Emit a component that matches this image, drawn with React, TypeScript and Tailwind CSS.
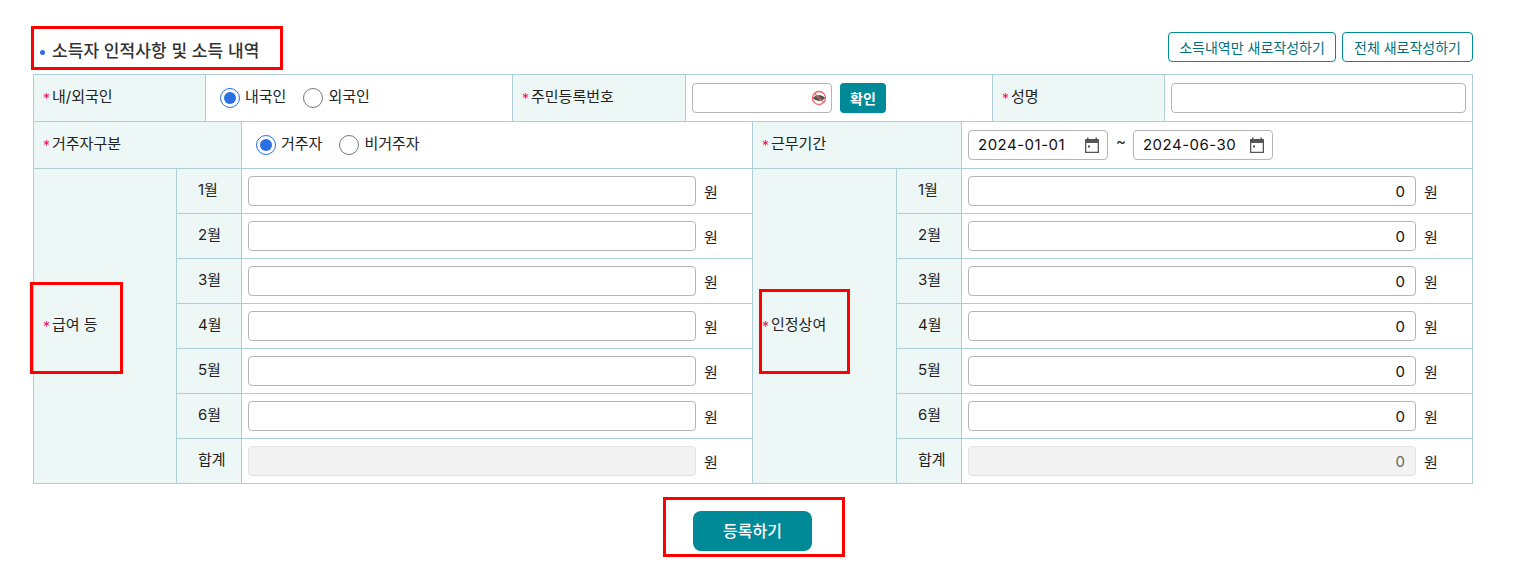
const months = ["1월", "2월", "3월", "4월", "5월", "6월"]

const font = "font-['Inter','Noto_Sans_CJK_KR',sans-serif]"
const cell = "border-r border-b border-[#aecdd4] flex items-center"
const head = `${cell} bg-[#edf7f6] pl-[9px] pb-[1px] text-[15px] text-[#222]`
const subHead = `${cell} bg-[#edf7f6] pl-[21px] pb-[1px] text-[15px] text-[#222]`
const field = "h-[30px] rounded-[4px] border px-[9px] text-[15px] outline-none"

function Label({ text }: { text: string }) {
  return (
    <>
      <span className="mr-[2px] mt-[3px] text-[14px] leading-none text-[#f0115f]">*</span>
      <span>{text}</span>
    </>
  )
}

function Radio({ label, checked, gap }: { label: string; checked?: boolean; gap: string }) {
  return (
    <label className={`flex items-center gap-[5px] text-[15px] text-[#222] ${gap}`}>
      <span
        className={`flex h-[20px] w-[20px] items-center justify-center rounded-full border bg-white ${
          checked ? "border-[#2b6fe4]" : "border-[#767676]"
        }`}
      >
        {checked && <span className="h-[12px] w-[12px] rounded-full bg-[#2b6fe4]" />}
      </span>
      <span className="-mt-[1px]">{label}</span>
    </label>
  )
}

function CalendarIcon() {
  return (
    <svg width="18" height="18" viewBox="0 0 18 18" className="shrink-0">
      <path
        d="M4 1.500h1.500V3h7V1.500H14V3h1.500A.5.5 0 0 1 16 3.500v13a.5.5 0 0 1-.5.5h-13a.5.5 0 0 1-.5-.5v-13A.5.5 0 0 1 2.500 3H4zM3.300 7v8.700h11.400V7z"
        fill="#555"
        fillRule="evenodd"
      />
      <rect x="5" y="9.500" width="2" height="2" fill="#555" />
    </svg>
  )
}

function DateBox({ value }: { value: string }) {
  return (
    <div className="flex h-[30px] w-[140px] items-center justify-between rounded-[4px] border border-[#b5b5b5] bg-white pl-[9px] pr-[6px] text-[15px] tracking-[0.5px] text-[#111]">
      <span>{value}</span>
      <CalendarIcon />
    </div>
  )
}

function EyeOff() {
  return (
    <svg width="16" height="16" viewBox="0 0 16 16" className="absolute right-[5px] top-[7px]">
      <path d="M1.500 8Q8 2 14.500 8 8 14 1.500 8z" fill="#555" />
      <circle cx="8" cy="8" r="6.500" fill="none" stroke="#f0605f" strokeWidth="1.300" />
      <path d="M3.500 3.500 12.500 12.500" stroke="#f0605f" strokeWidth="1.300" />
    </svg>
  )
}

function AmountRow({
  label,
  value,
  disabled,
  span,
}: {
  label: string
  value?: string
  disabled?: boolean
  span: [string, string]
}) {
  return (
    <>
      <div className={`${subHead} ${span[0]}`}>{label}</div>
      <div className={`${cell} ${span[1]} pl-[6px]`}>
        <input
          readOnly
          value={value ?? ""}
          className={`${field} w-[448px] pr-[10px] text-right ${
            disabled ? "border-[#e2e2e2] bg-[#f3f3f3] text-[#666]" : "border-[#b5b5b5] bg-white text-[#111]"
          }`}
        />
        <span className="ml-[8px] mt-[4px] text-[15px] text-[#222]">원</span>
      </div>
    </>
  )
}

export default function App() {
  return (
    <div className={`relative h-[570px] w-[1519px] overflow-hidden bg-white ${font}`}>
      <div className="ml-[33px] w-[1440px] pt-[32px]">
        {/* TITLE */}
        <div className="flex h-[30px] items-center justify-between">
          <h2 className="mt-[10px] flex items-center gap-[7px] pl-[7px] text-[17px] font-medium tracking-[0.1px] text-[#333]">
            <span className="mt-[1px] h-[5px] w-[5px] rounded-full bg-[#2b6fe4]" />
            소득자 인적사항 및 소득 내역
          </h2>

          <div className="flex gap-[6px]">
            <button className="h-[30px] w-[168px] rounded-[4px] border border-[#008a98] bg-white text-[14px] text-[#00707c]">
              소득내역만 새로작성하기
            </button>
            <button className="h-[30px] w-[131px] rounded-[4px] border border-[#008a98] bg-white text-[14px] text-[#00707c]">
              전체 새로작성하기
            </button>
          </div>
        </div>

        {/* TABLE */}
        <div className="mt-[12px] grid grid-cols-[143px_29px_36px_271px_173px_67px_144px_65px_31px_172px_308px] grid-rows-[47px_47px_repeat(7,45px)] border-l border-t border-[#aecdd4]">
          {/* ROW 1 */}
          <div className={`${head} col-span-2`}>
            <Label text="내/외국인" />
          </div>
          <div className={`${cell} col-span-2 pl-[14px]`}>
            <Radio label="내국인" checked gap="mr-[17px]" />
            <Radio label="외국인" gap="" />
          </div>
          <div className={head}>
            <Label text="주민등록번호" />
          </div>
          <div className={`${cell} col-span-4 pl-[6px]`}>
            <div className="relative">
              <input readOnly className={`${field} w-[140px] border-[#b5b5b5] bg-white`} />
              <EyeOff />
            </div>
            <button className="ml-[8px] h-[30px] w-[46px] rounded-[4px] bg-[#008a98] text-[14px] font-semibold text-white">
              확인
            </button>
          </div>
          <div className={head}>
            <Label text="성명" />
          </div>
          <div className={`${cell} pl-[6px]`}>
            <input readOnly className={`${field} w-[295px] border-[#b5b5b5] bg-white`} />
          </div>

          {/* ROW 2 */}
          <div className={`${head} col-span-3`}>
            <Label text="거주자구분" />
          </div>
          <div className={`${cell} col-span-3 pl-[14px]`}>
            <Radio label="거주자" checked gap="mr-[17px]" />
            <Radio label="비거주자" gap="" />
          </div>
          <div className={`${head} col-span-2`}>
            <Label text="근무기간" />
          </div>
          <div className={`${cell} col-span-3 pl-[6px]`}>
            <DateBox value="2024-01-01" />
            <span className="ml-[8px] mr-[7px] mb-[6px] text-[15px] text-[#222]">~</span>
            <DateBox value="2024-06-30" />
          </div>

          {/* AMOUNTS */}
          <div className={`${head} col-start-1 row-start-3 row-span-7`}>
            <Label text="급여 등" />
          </div>
          <div className={`${head} col-start-7 row-start-3 row-span-7`}>
            <Label text="인정상여" />
          </div>
          {months.map((month) => (
            <div key={month} className="contents">
              <AmountRow label={month} span={["col-start-2 col-span-2", "col-start-4 col-span-3"]} />
              <AmountRow label={month} value="0" span={["col-start-8", "col-start-9 col-span-3"]} />
            </div>
          ))}
          <AmountRow label="합계" disabled span={["col-start-2 col-span-2", "col-start-4 col-span-3"]} />
          <AmountRow label="합계" value="0" disabled span={["col-start-8", "col-start-9 col-span-3"]} />
        </div>

        {/* SUBMIT */}
        <div className="mt-[27px] flex justify-center pr-[1px]">
          <button className="h-[40px] w-[119px] rounded-[8px] bg-[#008a98] text-[16px] font-medium text-white">
            등록하기
          </button>
        </div>
      </div>

      {/* RED ANNOTATIONS */}
      <div className="absolute left-[31px] top-[26px] h-[44px] w-[252px] border-[3px] border-[#ff0000]" />
      <div className="absolute left-[30px] top-[282px] h-[92px] w-[93px] border-[3px] border-[#ff0000]" />
      <div className="absolute left-[759px] top-[289px] h-[85px] w-[91px] border-[3px] border-[#ff0000]" />
      <div className="absolute left-[663px] top-[497px] h-[60px] w-[182px] border-[3px] border-[#ff0000]" />
    </div>
  )
}
